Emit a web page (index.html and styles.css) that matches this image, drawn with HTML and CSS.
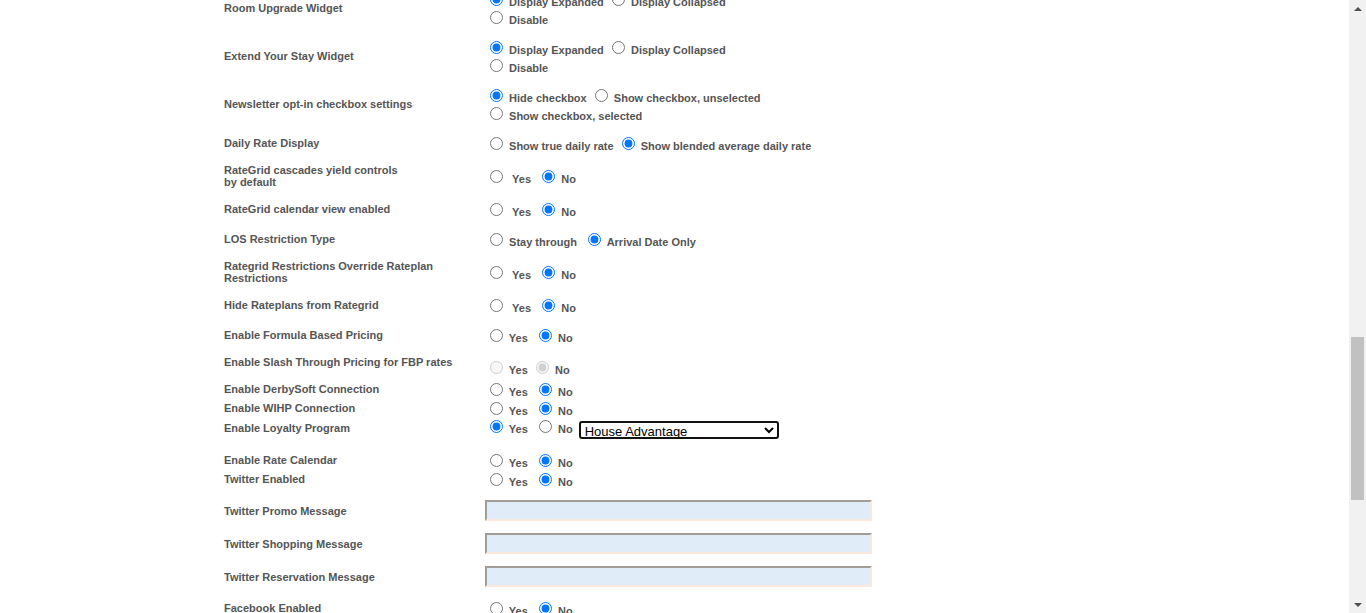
FILE: index.html
```html
<!DOCTYPE html>
<html lang="en">
<head>
<meta charset="utf-8">
<title>Settings</title>
<link rel="stylesheet" href="styles.css">
</head>
<body>
<div class="viewport">
  <main class="main">
    <div class="form">
      <div class="row first">
        <div class="label">Room Upgrade Widget</div>
        <div class="control"><input type="radio" name="ru" checked> Display Expanded <input type="radio" name="ru"> Display Collapsed<br><input type="radio" name="ru"> Disable</div>
      </div>
      <div class="row">
        <div class="label">Extend Your Stay Widget</div>
        <div class="control"><input type="radio" name="ey" checked> Display Expanded <input type="radio" name="ey"> Display Collapsed<br><input type="radio" name="ey"> Disable</div>
      </div>
      <div class="row">
        <div class="label">Newsletter opt-in checkbox settings</div>
        <div class="control"><input type="radio" name="nl" checked> Hide checkbox <input type="radio" name="nl"> Show checkbox, unselected<br><input type="radio" name="nl"> Show checkbox, selected</div>
      </div>
      <div class="row">
        <div class="label">Daily Rate Display</div>
        <div class="control"><input type="radio" name="dr"> Show true daily rate <input type="radio" name="dr" checked> Show blended average daily rate</div>
      </div>
      <div class="row">
        <div class="label">RateGrid cascades yield controls<br>by default</div>
        <div class="control"><input type="radio" name="rc"> &nbsp;Yes&nbsp; <input type="radio" name="rc" checked> No</div>
      </div>
      <div class="row">
        <div class="label">RateGrid calendar view enabled</div>
        <div class="control"><input type="radio" name="cv"> &nbsp;Yes&nbsp; <input type="radio" name="cv" checked> No</div>
      </div>
      <div class="row">
        <div class="label">LOS Restriction Type</div>
        <div class="control"><input type="radio" name="los"> Stay through&nbsp; <input type="radio" name="los" checked> Arrival Date Only</div>
      </div>
      <div class="row">
        <div class="label">Rategrid Restrictions Override Rateplan<br>Restrictions</div>
        <div class="control"><input type="radio" name="ro"> &nbsp;Yes&nbsp; <input type="radio" name="ro" checked> No</div>
      </div>
      <div class="row">
        <div class="label">Hide Rateplans from Rategrid</div>
        <div class="control"><input type="radio" name="hr"> &nbsp;Yes&nbsp; <input type="radio" name="hr" checked> No</div>
      </div>
      <div class="row">
        <div class="label">Enable Formula Based Pricing</div>
        <div class="control"><input type="radio" name="fbp"> Yes&nbsp; <input type="radio" name="fbp" checked> No</div>
      </div>
      <div class="row row-offset gap-10">
        <div class="label">Enable Slash Through Pricing for FBP rates</div>
        <div class="control"><input type="radio" name="st" disabled> Yes <input type="radio" name="st" disabled checked> No</div>
      </div>
      <div class="row gap-4">
        <div class="label">Enable DerbySoft Connection</div>
        <div class="control"><input type="radio" name="ds"> Yes&nbsp; <input type="radio" name="ds" checked> No</div>
      </div>
      <div class="row gap-1">
        <div class="label">Enable WIHP Connection</div>
        <div class="control"><input type="radio" name="wihp"> Yes&nbsp; <input type="radio" name="wihp" checked> No</div>
      </div>
      <div class="row gap-0">
        <div class="label">Enable Loyalty Program</div>
        <div class="control"><input type="radio" name="lp" checked> Yes&nbsp; <input type="radio" name="lp"> No <select class="select"><option>House Advantage</option></select></div>
      </div>
      <div class="row">
        <div class="label">Enable Rate Calendar</div>
        <div class="control"><input type="radio" name="rcal"> Yes&nbsp; <input type="radio" name="rcal" checked> No</div>
      </div>
      <div class="row gap-1">
        <div class="label">Twitter Enabled</div>
        <div class="control"><input type="radio" name="tw"> Yes&nbsp; <input type="radio" name="tw" checked> No</div>
      </div>
      <div class="row">
        <div class="label">Twitter Promo Message</div>
        <div class="control"><input type="text" class="text"></div>
      </div>
      <div class="row">
        <div class="label">Twitter Shopping Message</div>
        <div class="control"><input type="text" class="text"></div>
      </div>
      <div class="row">
        <div class="label">Twitter Reservation Message</div>
        <div class="control"><input type="text" class="text"></div>
      </div>
      <div class="row">
        <div class="label">Facebook Enabled</div>
        <div class="control"><input type="radio" name="fb"> Yes&nbsp; <input type="radio" name="fb" checked> No</div>
      </div>
    </div>
  </main>
  <div class="scrollbar">
    <div class="arrow arrow-up"></div>
    <div class="track"><div class="thumb"></div></div>
    <div class="arrow arrow-down"></div>
  </div>
</div>
</body>
</html>
```
FILE: styles.css
```css
html, body {
  margin: 0;
  padding: 0;
  background: #fff;
}

.viewport {
  display: flex;
  height: 613px;
  overflow: hidden;
}

.main {
  flex: 1;
  overflow: hidden;
}

.form {
  padding-left: 224px;
  margin-top: -10px;
  font-family: "Liberation Sans", Arial, sans-serif;
  font-size: 11px;
  font-weight: bold;
  color: #555;
}

.row {
  display: grid;
  grid-template-columns: 261px 1fr;
  align-items: center;
  margin-top: 12px;
}

.row.first { margin-top: 0; }
.row.gap-0 { margin-top: 0; }
.row.gap-1 { margin-top: 1px; }
.row.gap-4 { margin-top: 4px; }
.row.gap-10 { margin-top: 10px; }

.row-offset {
  align-items: start;
}
.row-offset .label {
  padding-top: 2px;
}
.row-offset .control {
  padding-top: 4px;
}

.label {
  line-height: 12px;
}

.control {
  line-height: normal;
  white-space: nowrap;
}

.control input[type="radio"] {
  margin: 3px 3px 0 5px;
}

.select {
  margin-left: 3px;
  width: 200px;
  height: 18px;
  font-family: "Liberation Sans", Arial, sans-serif;
  font-size: 13px;
  font-weight: normal;
  color: #000;
  background: #fff;
  border: 2px solid #111;
  border-radius: 3px;
  vertical-align: middle;
  padding: 0;
}

.text {
  display: block;
  box-sizing: border-box;
  width: 387px;
  height: 21px;
  margin: 0;
  background: #e0edf9;
  border-style: solid;
  border-width: 2px;
  border-color: #a39d97 #fbe8dc #fbe8dc #a39d97;
}

.scrollbar {
  width: 17px;
  flex: none;
  display: flex;
  flex-direction: column;
  background: #f1f1f1;
}

.arrow {
  height: 17px;
  flex: none;
  display: flex;
  align-items: center;
  justify-content: center;
}

.arrow::before {
  content: "";
  width: 0;
  height: 0;
  border-left: 4px solid transparent;
  border-right: 4px solid transparent;
}

.arrow-up::before {
  border-bottom: 4px solid #505050;
}

.arrow-down::before {
  border-top: 4px solid #505050;
}

.track {
  flex: 1;
  padding: 0 2px;
}

.thumb {
  margin-top: 320px;
  height: 163px;
  background: #c1c1c1;
}
```
